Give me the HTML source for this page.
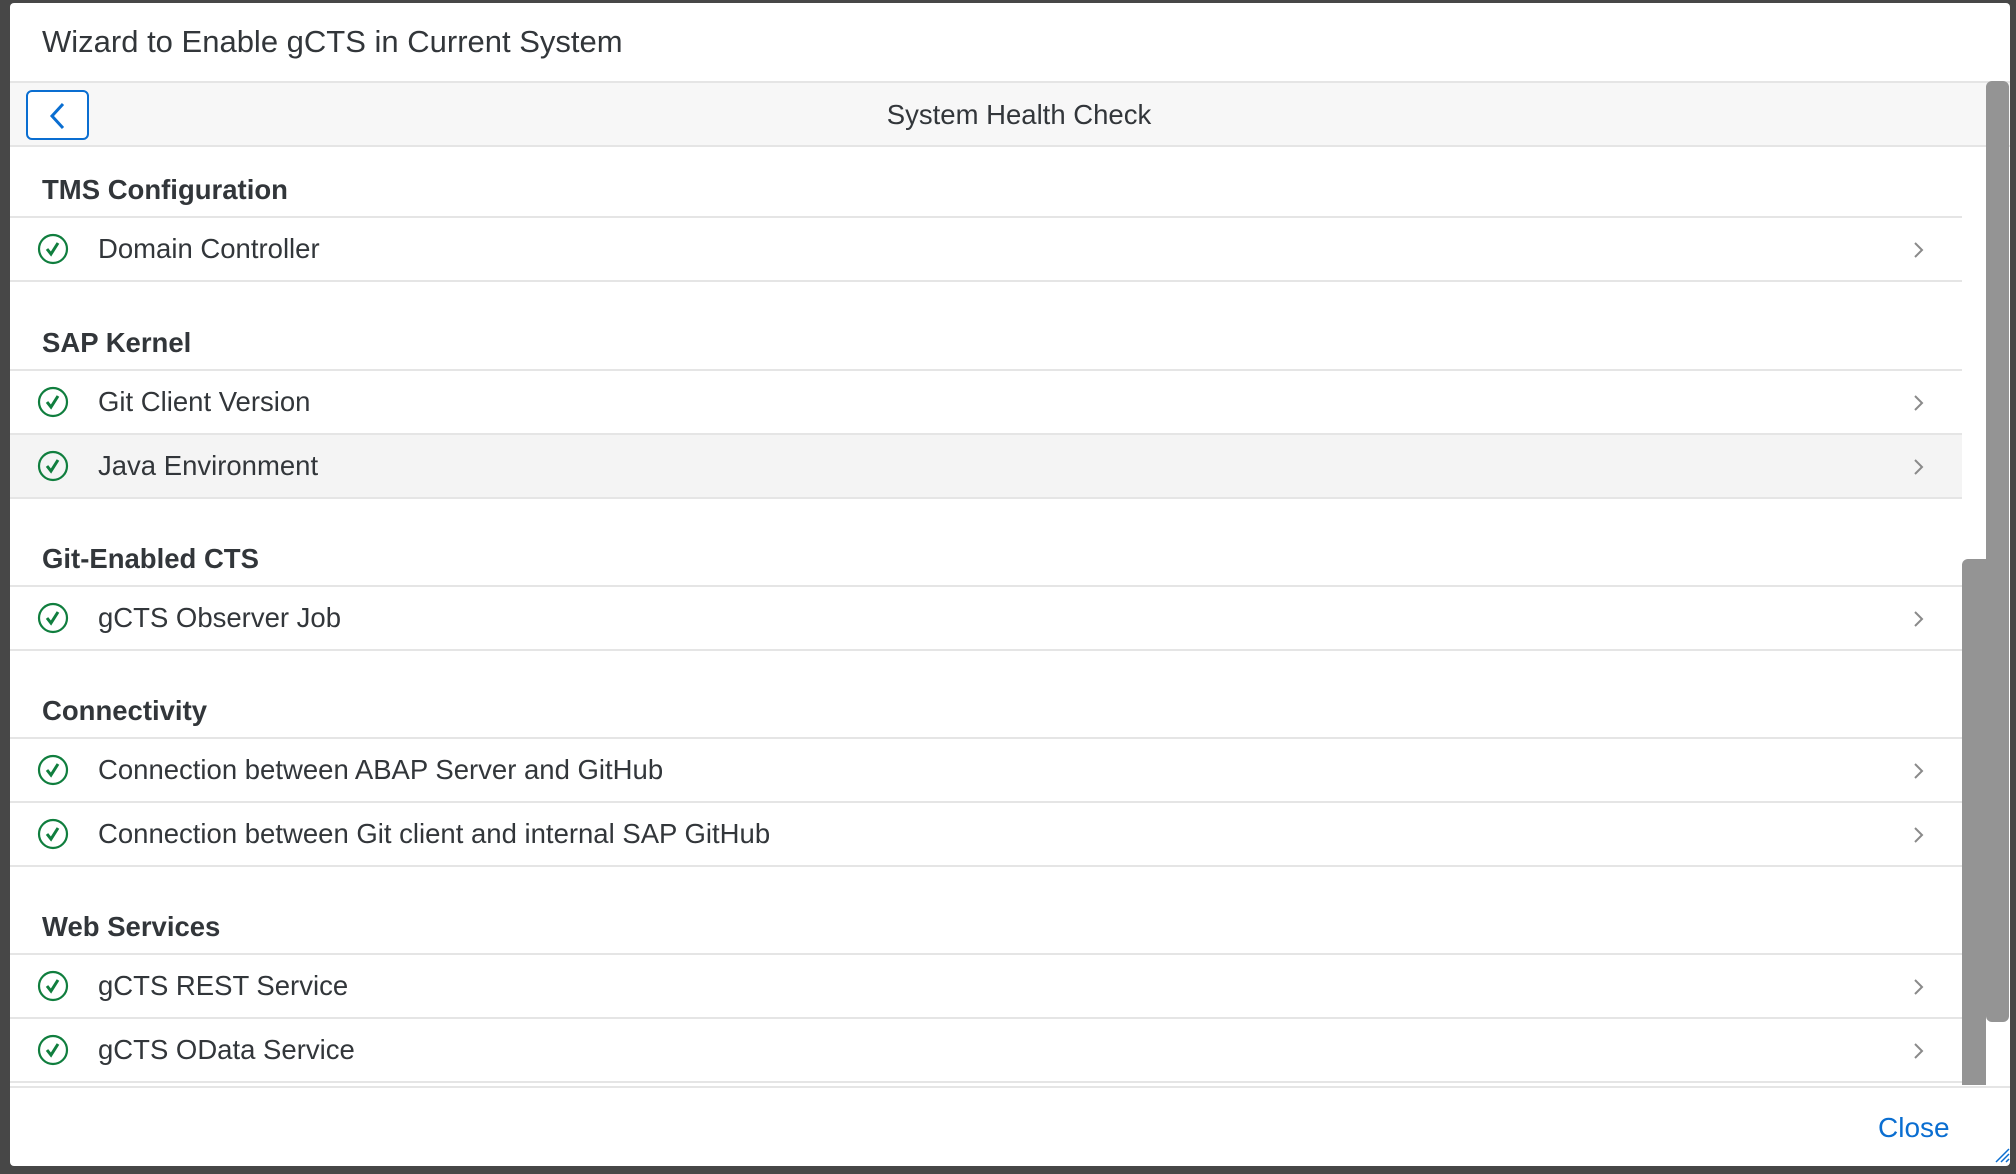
<!DOCTYPE html>
<html><head><meta charset="utf-8"><style>
*{box-sizing:border-box;margin:0;padding:0}
body{width:2016px;height:1174px;background:#474747;font-family:"Liberation Sans",sans-serif;position:relative;overflow:hidden}
.dlg{position:absolute;left:10px;top:3px;width:2000px;height:1163px;background:#fff;border-radius:4px;overflow:hidden}
.title{position:absolute;left:32px;top:21px;font-size:31px;color:#32363a}
.hdr{position:absolute;left:0;top:78px;width:2000px;height:66px;background:#f7f7f7;border-top:2px solid #e5e5e5;border-bottom:2px solid #e5e5e5}
.back{position:absolute;left:16px;top:7px;width:63px;height:50px;border:2px solid #0a6ed1;border-radius:6px;background:#fff}
.sub{position:absolute;left:11px;width:1996px;top:16px;text-align:center;font-size:27.5px;color:#32363a}
.grp{position:absolute;left:32px;font-size:27.5px;font-weight:bold;color:#32363a}
.line{position:absolute;left:0;width:1952px;height:2px;background:#e5e5e5}
.row{position:absolute;left:0;width:1952px;height:62px}
.row.hl{background:#f4f4f4}
.row svg.ck{position:absolute;left:27px;top:15px}
.row span{position:absolute;left:88px;top:15px;font-size:27.5px;color:#32363a}
.row svg.ch{position:absolute;left:1898px;top:22px}
.sb1{position:absolute;left:1976px;top:78px;width:23px;height:941px;background:#949494;border-radius:6px}
.sb2{position:absolute;left:1952px;top:556px;width:24px;height:526px;background:#949494;border-radius:6px 0 0 0}
.foot{position:absolute;left:0;top:1083px;width:2000px;height:2px;background:#e5e5e5}
.close{position:absolute;left:1868px;top:1109px;font-size:28px;color:#0a6ed1}
</style></head><body>
<div class="dlg">
<div class="title">Wizard to Enable gCTS in Current System</div>
<div class="hdr"><div class="back"><svg width="63" height="50" viewBox="0 0 63 50"><path d="M35 12 L24 24 L35 36" fill="none" stroke="#0a6ed1" stroke-width="3"/></svg></div><div class="sub">System Health Check</div></div>

<div class="grp" style="top:171px">TMS Configuration</div>
<div class="line" style="top:213px"></div>
<div class="row" style="top:215px"><svg class="ck" width="32" height="32" viewBox="0 0 32 32"><circle cx="16" cy="16" r="14" fill="none" stroke="#107e3e" stroke-width="2.2"/><path d="M10 16 L14 21 L21 10" fill="none" stroke="#107e3e" stroke-width="3"/></svg><span>Domain Controller</span><svg class="ch" width="20" height="20" viewBox="0 0 20 20"><path d="M7 3 L14 10 L7 17" fill="none" stroke="#8a8a8a" stroke-width="2"/></svg></div>
<div class="line" style="top:277px"></div>

<div class="grp" style="top:324px">SAP Kernel</div>
<div class="line" style="top:366px"></div>
<div class="row" style="top:368px"><svg class="ck" width="32" height="32" viewBox="0 0 32 32"><circle cx="16" cy="16" r="14" fill="none" stroke="#107e3e" stroke-width="2.2"/><path d="M10 16 L14 21 L21 10" fill="none" stroke="#107e3e" stroke-width="3"/></svg><span>Git Client Version</span><svg class="ch" width="20" height="20" viewBox="0 0 20 20"><path d="M7 3 L14 10 L7 17" fill="none" stroke="#8a8a8a" stroke-width="2"/></svg></div>
<div class="line" style="top:430px"></div>
<div class="row hl" style="top:432px"><svg class="ck" width="32" height="32" viewBox="0 0 32 32"><circle cx="16" cy="16" r="14" fill="none" stroke="#107e3e" stroke-width="2.2"/><path d="M10 16 L14 21 L21 10" fill="none" stroke="#107e3e" stroke-width="3"/></svg><span>Java Environment</span><svg class="ch" width="20" height="20" viewBox="0 0 20 20"><path d="M7 3 L14 10 L7 17" fill="none" stroke="#8a8a8a" stroke-width="2"/></svg></div>
<div class="line" style="top:494px"></div>

<div class="grp" style="top:540px">Git-Enabled CTS</div>
<div class="line" style="top:582px"></div>
<div class="row" style="top:584px"><svg class="ck" width="32" height="32" viewBox="0 0 32 32"><circle cx="16" cy="16" r="14" fill="none" stroke="#107e3e" stroke-width="2.2"/><path d="M10 16 L14 21 L21 10" fill="none" stroke="#107e3e" stroke-width="3"/></svg><span>gCTS Observer Job</span><svg class="ch" width="20" height="20" viewBox="0 0 20 20"><path d="M7 3 L14 10 L7 17" fill="none" stroke="#8a8a8a" stroke-width="2"/></svg></div>
<div class="line" style="top:646px"></div>

<div class="grp" style="top:692px">Connectivity</div>
<div class="line" style="top:734px"></div>
<div class="row" style="top:736px"><svg class="ck" width="32" height="32" viewBox="0 0 32 32"><circle cx="16" cy="16" r="14" fill="none" stroke="#107e3e" stroke-width="2.2"/><path d="M10 16 L14 21 L21 10" fill="none" stroke="#107e3e" stroke-width="3"/></svg><span>Connection between ABAP Server and GitHub</span><svg class="ch" width="20" height="20" viewBox="0 0 20 20"><path d="M7 3 L14 10 L7 17" fill="none" stroke="#8a8a8a" stroke-width="2"/></svg></div>
<div class="line" style="top:798px"></div>
<div class="row" style="top:800px"><svg class="ck" width="32" height="32" viewBox="0 0 32 32"><circle cx="16" cy="16" r="14" fill="none" stroke="#107e3e" stroke-width="2.2"/><path d="M10 16 L14 21 L21 10" fill="none" stroke="#107e3e" stroke-width="3"/></svg><span>Connection between Git client and internal SAP GitHub</span><svg class="ch" width="20" height="20" viewBox="0 0 20 20"><path d="M7 3 L14 10 L7 17" fill="none" stroke="#8a8a8a" stroke-width="2"/></svg></div>
<div class="line" style="top:862px"></div>

<div class="grp" style="top:908px">Web Services</div>
<div class="line" style="top:950px"></div>
<div class="row" style="top:952px"><svg class="ck" width="32" height="32" viewBox="0 0 32 32"><circle cx="16" cy="16" r="14" fill="none" stroke="#107e3e" stroke-width="2.2"/><path d="M10 16 L14 21 L21 10" fill="none" stroke="#107e3e" stroke-width="3"/></svg><span>gCTS REST Service</span><svg class="ch" width="20" height="20" viewBox="0 0 20 20"><path d="M7 3 L14 10 L7 17" fill="none" stroke="#8a8a8a" stroke-width="2"/></svg></div>
<div class="line" style="top:1014px"></div>
<div class="row" style="top:1016px"><svg class="ck" width="32" height="32" viewBox="0 0 32 32"><circle cx="16" cy="16" r="14" fill="none" stroke="#107e3e" stroke-width="2.2"/><path d="M10 16 L14 21 L21 10" fill="none" stroke="#107e3e" stroke-width="3"/></svg><span>gCTS OData Service</span><svg class="ch" width="20" height="20" viewBox="0 0 20 20"><path d="M7 3 L14 10 L7 17" fill="none" stroke="#8a8a8a" stroke-width="2"/></svg></div>
<div class="line" style="top:1078px"></div>

<div class="sb1"></div>
<div class="sb2"></div>
<div class="foot"></div>
<div class="close">Close</div>
<svg style="position:absolute;left:1984px;top:1140px" width="16" height="20" viewBox="0 0 16 20"><path d="M2 19 L15 6 M7 19 L15 11 M12 19 L15 16" stroke="#0a6ed1" stroke-width="1.5"/></svg>
</div>
</body></html>
